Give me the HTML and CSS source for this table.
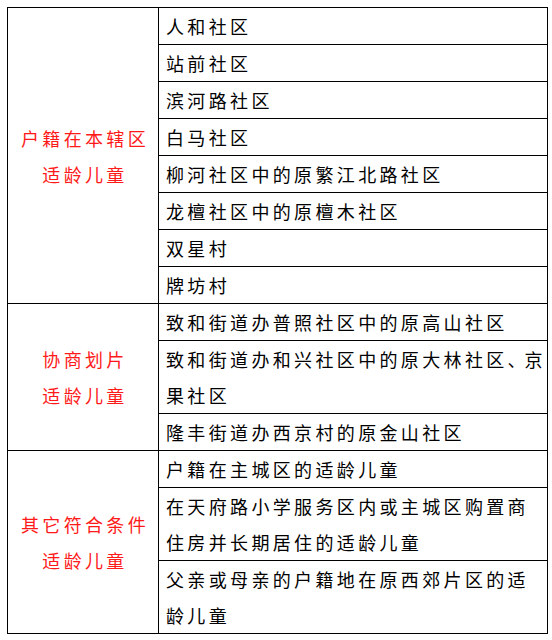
FILE: index.html
```html
<!DOCTYPE html>
<html lang="zh-CN">
<head>
<meta charset="utf-8">
<link rel="stylesheet" href="styles.css">
</head>
<body>
<table class="zone-table">
  <colgroup><col class="col-cat"><col class="col-item"></colgroup>
  <tr><td class="cat" rowspan="8">户籍在本辖区<br>适龄儿童</td><td class="item">人和社区</td></tr>
  <tr><td class="item">站前社区</td></tr>
  <tr><td class="item">滨河路社区</td></tr>
  <tr><td class="item">白马社区</td></tr>
  <tr><td class="item">柳河社区中的原繁江北路社区</td></tr>
  <tr><td class="item">龙檀社区中的原檀木社区</td></tr>
  <tr><td class="item">双星村</td></tr>
  <tr><td class="item">牌坊村</td></tr>
  <tr><td class="cat" rowspan="3">协商划片<br>适龄儿童</td><td class="item">致和街道办普照社区中的原高山社区</td></tr>
  <tr><td class="item">致和街道办和兴社区中的原大林社区<span class="comma">、</span>京<br>果社区</td></tr>
  <tr><td class="item">隆丰街道办西京村的原金山社区</td></tr>
  <tr><td class="cat" rowspan="3">其它符合条件<br>适龄儿童</td><td class="item">户籍在主城区的适龄儿童</td></tr>
  <tr><td class="item">在天府路小学服务区内或主城区购置商<br>住房并长期居住的适龄儿童</td></tr>
  <tr><td class="item">父亲或母亲的户籍地在原西郊片区的适<br>龄儿童</td></tr>
</table>
</body>
</html>
```

FILE: styles.css
```css
html, body {
  margin: 0;
  padding: 0;
  background: #ffffff;
}
body {
  padding: 7px 0 0 7px;
}
.zone-table {
  border-collapse: collapse;
  table-layout: fixed;
  width: 540px;
  font-family: "Noto Sans CJK SC", "Noto Sans", sans-serif;
  font-size: 18px;
  letter-spacing: 3.35px;
  line-height: 36px;
  color: #000;
}
.col-cat { width: 151px; }
.col-item { width: 389px; }
.zone-table td {
  border: 1px solid #000;
  padding: 0;
  vertical-align: middle;
  white-space: nowrap;
}
.cat {
  color: #ff1a1a;
  text-align: center;
  padding-left: 4px !important;
}
.item {
  padding-left: 7px !important;
  text-align: left;
}
.comma {
  letter-spacing: -1px;
}
```
